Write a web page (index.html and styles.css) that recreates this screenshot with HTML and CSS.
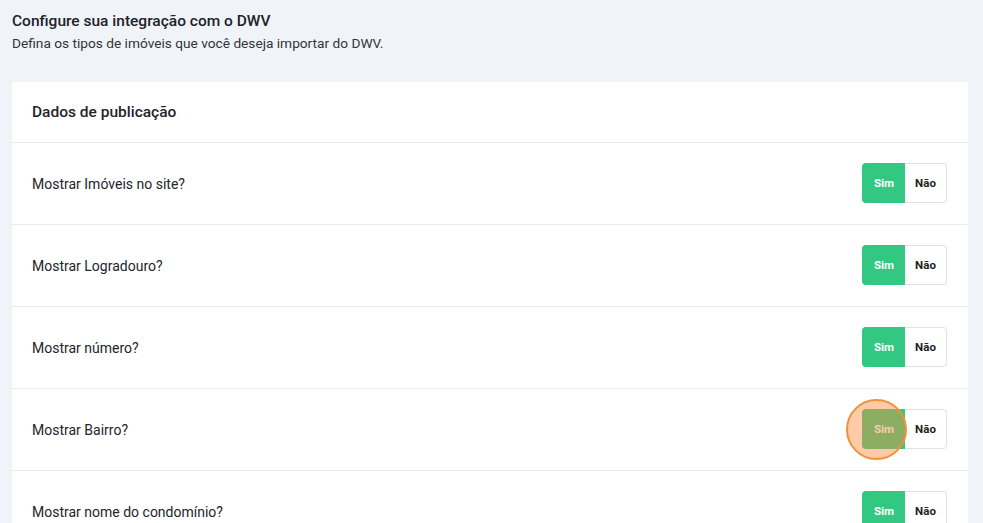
FILE: index.html
```html
<!DOCTYPE html>
<html lang="pt-BR">
<head>
    <meta charset="UTF-8">
    <meta name="viewport" content="width=device-width, initial-scale=1.0">
    <title>Integração DWV</title>
    <link rel="stylesheet" href="styles.css">
</head>
<body>
    <div class="page-header">
        <h1>Configure sua integração com o DWV</h1>
        <p>Defina os tipos de imóveis que você deseja importar do DWV.</p>
    </div>

    <div class="card">
        <div class="card-header">Dados de publicação</div>

        <div class="option-row">
            <span class="option-label">Mostrar Imóveis no site?</span>
            <div class="toggle">
                <button class="toggle-btn active">Sim</button>
                <button class="toggle-btn">Não</button>
            </div>
        </div>

        <div class="option-row">
            <span class="option-label">Mostrar Logradouro?</span>
            <div class="toggle">
                <button class="toggle-btn active">Sim</button>
                <button class="toggle-btn">Não</button>
            </div>
        </div>

        <div class="option-row">
            <span class="option-label">Mostrar número?</span>
            <div class="toggle">
                <button class="toggle-btn active">Sim</button>
                <button class="toggle-btn">Não</button>
            </div>
        </div>

        <div class="option-row">
            <span class="option-label">Mostrar Bairro?</span>
            <div class="toggle">
                <button class="toggle-btn active">Sim</button>
                <button class="toggle-btn">Não</button>
                <span class="click-marker"></span>
            </div>
        </div>

        <div class="option-row">
            <span class="option-label">Mostrar nome do condomínio?</span>
            <div class="toggle">
                <button class="toggle-btn active">Sim</button>
                <button class="toggle-btn">Não</button>
            </div>
        </div>
    </div>
</body>
</html>
```

FILE: styles.css
```css
html, body {
    height: 523px;
    overflow: hidden;
}
body {
    font-family: Roboto, "Liberation Sans", sans-serif;
    background: #f0f3f8;
    color: #24242c;
    margin: 0;
    padding: 11px 15px 0 12px;
    box-sizing: border-box;
}
.page-header h1 {
    font-size: 15.5px;
    font-weight: 500;
    margin: 0;
    line-height: 20px;
    color: #222229;
}
.page-header p {
    font-size: 13.7px;
    margin: 3px 0 0;
    line-height: 18px;
    color: #34343c;
}
.card {
    background: #fff;
    margin-top: 30px;
}
.card-header {
    font-size: 15.5px;
    font-weight: 500;
    padding: 0 20px;
    height: 60px;
    display: flex;
    align-items: center;
    border-bottom: 1px solid #e6e9ee;
}
.option-row {
    display: flex;
    justify-content: space-between;
    align-items: center;
    height: 81px;
    padding: 0 21px 0 20px;
    border-bottom: 1px solid #e6e9ee;
}
.option-label {
    font-size: 14px;
    color: #24242c;
}
.toggle {
    display: flex;
    position: relative;
    height: 40px;
    margin-top: -1px;
}
.toggle-btn {
    font-family: Roboto, "Liberation Sans", sans-serif;
    font-size: 11.5px;
    font-weight: 700;
    border: 1px solid #dfe3e8;
    background: #fff;
    color: #1e1e24;
    width: 42px;
    padding: 0;
    cursor: pointer;
}
.toggle-btn:first-child {
    width: 43px;
    border-radius: 4px 0 0 4px;
    border-right: none;
}
.toggle-btn:nth-child(2) {
    border-radius: 0 4px 4px 0;
    border-left: none;
}
.toggle-btn.active {
    background: #33c882;
    border-color: #33c882;
    color: #fff;
}
.click-marker {
    position: absolute;
    left: -16px;
    top: -10px;
    width: 57px;
    height: 57px;
    border-radius: 50%;
    border: 2px solid #f09238;
    background: rgba(250, 140, 60, 0.45);
    pointer-events: none;
}
```
